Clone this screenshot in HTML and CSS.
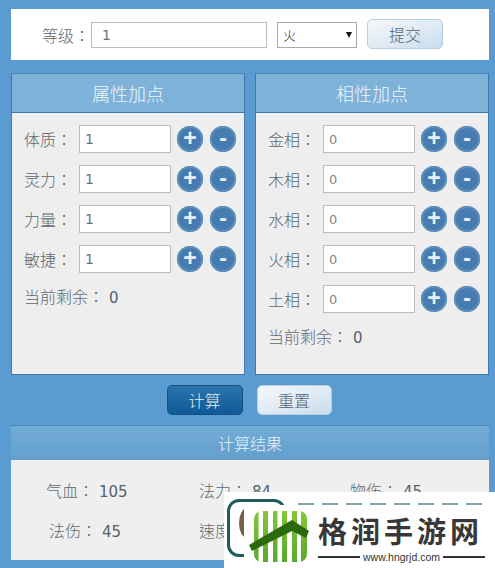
FILE: index.html
```html
<!DOCTYPE html>
<html lang="zh-TW">
<head>
<meta charset="utf-8">
<title>加点模拟器</title>
<link rel="stylesheet" href="styles.css">
</head>
<body>
<div class="page">
  <form class="top">
    <label class="top-label">等级：</label>
    <div class="input top-input">1</div>
    <div class="select"><span>火</span><i class="caret"></i></div>
    <div class="btn light submit">提交</div>
  </form>
  <div class="panels">
    <section class="panel">
      <h2 class="head">属性加点</h2>
      <div class="body">
        <div class="row"><span class="label">体质：</span><div class="input num">1</div><div class="round">+</div><div class="round">-</div></div>
        <div class="row"><span class="label">灵力：</span><div class="input num">1</div><div class="round">+</div><div class="round">-</div></div>
        <div class="row"><span class="label">力量：</span><div class="input num">1</div><div class="round">+</div><div class="round">-</div></div>
        <div class="row"><span class="label">敏捷：</span><div class="input num">1</div><div class="round">+</div><div class="round">-</div></div>
        <div class="left">当前剩余：<b>0</b></div>
      </div>
    </section>
    <section class="panel">
      <h2 class="head">相性加点</h2>
      <div class="body">
        <div class="row"><span class="label">金相：</span><div class="input num zero">0</div><div class="round">+</div><div class="round">-</div></div>
        <div class="row"><span class="label">木相：</span><div class="input num zero">0</div><div class="round">+</div><div class="round">-</div></div>
        <div class="row"><span class="label">水相：</span><div class="input num zero">0</div><div class="round">+</div><div class="round">-</div></div>
        <div class="row"><span class="label">火相：</span><div class="input num zero">0</div><div class="round">+</div><div class="round">-</div></div>
        <div class="row"><span class="label">土相：</span><div class="input num zero">0</div><div class="round">+</div><div class="round">-</div></div>
        <div class="left">当前剩余：<b>0</b></div>
      </div>
    </section>
  </div>
  <div class="actions">
    <div class="btn dark">计算</div>
    <div class="btn light">重置</div>
  </div>
  <section class="result">
    <h2 class="result-head">计算结果</h2>
    <div class="grid">
      <div class="stat s1">气血：<b>105</b></div>
      <div class="stat s2">法力：<b>84</b></div>
      <div class="stat s3">物伤：<b>45</b></div>
      <div class="stat s1 indent">法伤：<b>45</b></div>
      <div class="stat s2">速度：<b>45</b></div>
    </div>
  </section>
</div>
<div class="mark">
  <div class="mark-back"></div>
  <div class="mark-arc"></div>
  <div class="mark-dashes"></div>
  <svg class="mark-icon" viewBox="0 0 68 63" width="68" height="63" aria-hidden="true">
    <defs>
      <clipPath id="tile"><rect x="10" y="6" width="53" height="51" rx="8"/></clipPath>
      <linearGradient id="leaf" x1="0" y1="0" x2="0" y2="1">
        <stop offset="0" stop-color="#86c63a"/>
        <stop offset="1" stop-color="#58a82c"/>
      </linearGradient>
    </defs>
    <g clip-path="url(#tile)" fill="url(#leaf)">
      <rect x="10" y="6" width="4.5" height="51"/>
      <rect x="19" y="6" width="5" height="51"/>
      <rect x="29" y="6" width="4.5" height="51"/>
      <rect x="38" y="6" width="5" height="51"/>
      <rect x="48" y="6" width="5" height="51"/>
      <rect x="57" y="6" width="6" height="51"/>
    </g>
    <path d="M5 40 L48 15 L65 26 L62 33 L48 26 L8 46Z" fill="#2a6a0a"/>
  </svg>
  <div class="mark-text">
    <div class="mark-name">格润手游网</div>
    <div class="mark-url"><span>www.hngrjd.com</span></div>
  </div>
</div>
</body>
</html>
```
FILE: styles.css
```css
* { box-sizing: border-box; }
html, body { margin: 0; padding: 0; }
body {
  width: 495px;
  height: 568px;
  overflow: hidden;
  position: relative;
  background: #5a9bd1;
  color: #5a6670;
  font-family: "Noto Sans CJK TC", "Liberation Sans", sans-serif;
  font-weight: 300;
}
.page { padding: 9px 6px 0 11px; display: flex; flex-direction: column; }
.top {
  height: 51px;
  background: #fff;
  display: flex;
  align-items: center;
  padding-left: 31px;
  font-size: 16px;
}
.top-label { width: 49px; color: #666; }
.input {
  background: #fff;
  border: 1px solid #bcbcbc;
  font-family: "DejaVu Sans", sans-serif;
  font-weight: 400;
  font-size: 14px;
  color: #6a737c;
  display: flex;
  align-items: center;
  padding-left: 10px;
}
.top-input { width: 176px; height: 26px; margin-right: 10px; }
.select {
  width: 80px;
  height: 26px;
  border: 1px solid #aaa;
  background: #fff;
  color: #333;
  font-size: 13px;
  display: flex;
  align-items: center;
  justify-content: space-between;
  padding: 0 4px 0 5px;
  margin-right: 10px;
}
.caret {
  width: 0;
  height: 0;
  border-left: 3px solid transparent;
  border-right: 3px solid transparent;
  border-top: 6px solid #111;
}
.btn {
  width: 75px;
  height: 30px;
  border-radius: 5px;
  display: flex;
  align-items: center;
  justify-content: center;
  font-size: 16px;
}
.light {
  background: linear-gradient(160deg, #f4f8fb, #dfeaf4 55%, #c7dcee);
  border: 1px solid #b9cfdf;
  color: #55626e;
}
.submit { width: 76px; margin-top: -1px; }
.panels { display: flex; gap: 10px; margin-top: 13px; }
.panel {
  width: 234px;
  height: 302px;
  background: #eeeeee;
  border: 1px solid #3f78a8;
  border-top-color: #4a86b8;
  display: flex;
  flex-direction: column;
}
.head {
  margin: 0;
  height: 39px;
  background: #7fb2d8;
  border-bottom: 1px solid #3f78a8;
  color: #eef6fb;
  font-size: 18px;
  font-weight: 300;
  text-align: center;
  line-height: 38px;
}
.body { padding: 12px 0 0 12px; display: flex; flex-direction: column; gap: 12px; }
.row { display: flex; align-items: center; height: 28px; }
.label { width: 55px; font-size: 16px; color: #5f6870; white-space: nowrap; }
.num { width: 92px; height: 28px; padding-left: 5px; margin-right: 6px; }
.zero { font-size: 13px; color: #7d868f; }
.round {
  width: 26px;
  height: 26px;
  border-radius: 50%;
  background: #467cb0;
  box-shadow: inset 0 0 0 2px #5d8fbd;
  color: #e9f1f8;
  font-family: "Liberation Sans", sans-serif;
  font-size: 23px;
  font-weight: 700;
  line-height: 24px;
  text-align: center;
  margin-right: 7px;
}
.left { font-size: 16px; color: #5f6870; margin-top: -1px; }
.left b, .stat b {
  font-family: "DejaVu Sans", sans-serif;
  font-weight: 400;
  font-size: 15px;
  color: #55616c;
  margin-left: 5px;
}
.actions { display: flex; justify-content: center; gap: 14px; margin-top: 10px; padding-right: 2px; }
.dark {
  width: 76px;
  background: linear-gradient(180deg, #2c74ad, #0f5a97);
  border: 1px solid #12507f;
  color: #e6f0f8;
}
.result { margin-top: 10px; height: 135px; width: 478px; background: #efefef; display: flex; flex-direction: column; }
.result-head {
  margin: 0;
  height: 35px;
  background: linear-gradient(180deg, #73acd6, #639fce);
  border-top: 1px solid #4a86b8;
  color: #e9f3fa;
  font-size: 16px;
  font-weight: 300;
  text-align: center;
  line-height: 34px;
}
.grid {
  display: grid;
  grid-template-columns: 153px 151px 1fr;
  grid-auto-rows: 40px;
  padding: 10px 0 0 35px;
  font-size: 16px;
  color: #5f6870;
}
.stat { line-height: 40px; white-space: nowrap; }
.indent { padding-left: 3px; }
.mark {
  position: absolute;
  left: 224px;
  top: 492px;
  width: 271px;
  height: 76px;
  background: #fff;
}
.mark-back {
  position: absolute;
  left: 3px;
  top: 7px;
  width: 59px;
  height: 58px;
  border: 3px solid #1f5d5d;
  border-radius: 12px;
}
.mark-arc {
  position: absolute;
  left: 15px;
  top: 16px;
  width: 16px;
  height: 30px;
  border-left: 6px solid #7a6248;
  border-radius: 50%;
}
.mark-dashes {
  position: absolute;
  left: 74px;
  top: 11px;
  width: 186px;
  height: 2px;
  background: repeating-linear-gradient(90deg, #7fa5ad 0 16px, transparent 16px 24px);
}
.mark-icon { position: absolute; left: 20px; top: 13px; background: #fff; }
.mark-text { position: absolute; left: 94px; top: 19px; width: 167px; }
.mark-name {
  font-size: 29px;
  line-height: 38px;
  font-weight: 700;
  color: #383838;
  white-space: nowrap;
  letter-spacing: 4px;
}
.mark-url {
  display: flex;
  align-items: center;
  justify-content: center;
  height: 14px;
  margin-top: 1px;
  font-family: "Liberation Sans", sans-serif;
  font-size: 10.5px;
  font-weight: 400;
  color: #333;
  background: linear-gradient(#333, #333) center / 100% 2px no-repeat;
}
.mark-url span { background: #fff; padding: 0 3px; }
```
